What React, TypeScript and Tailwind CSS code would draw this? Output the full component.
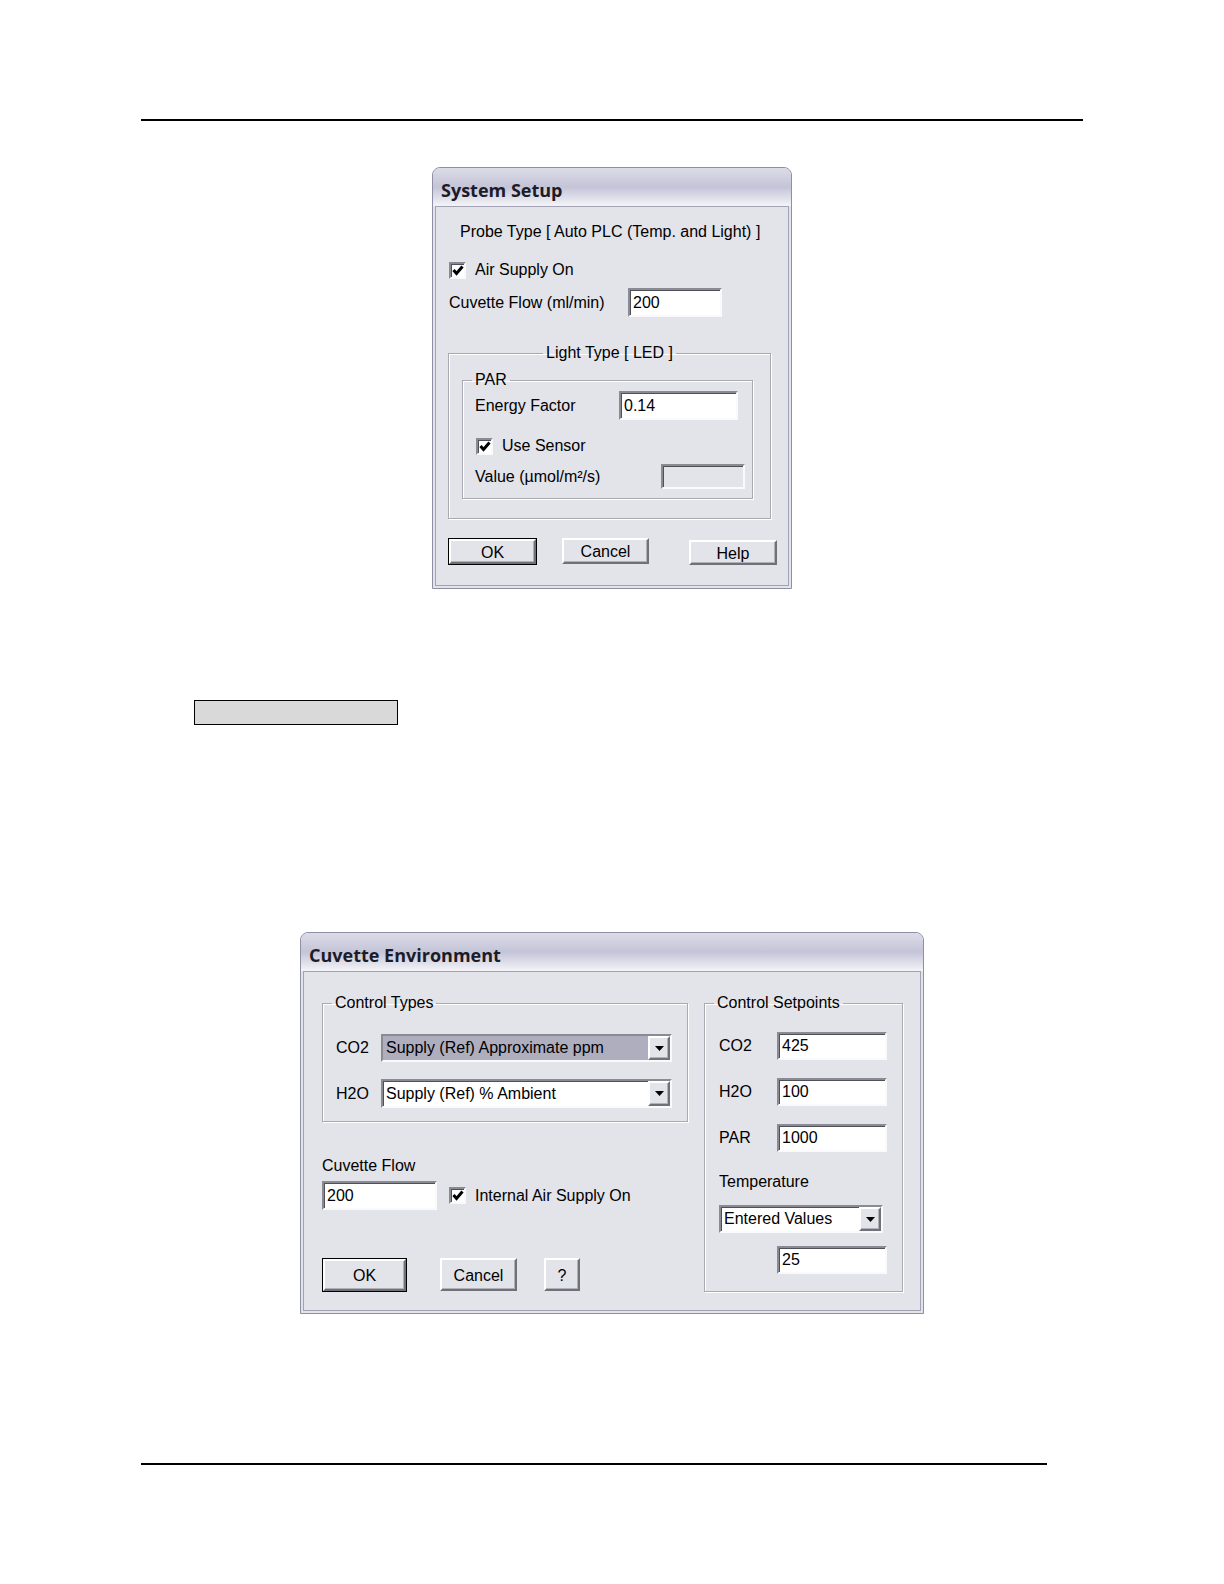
import React from 'react'

const font = { fontFamily: '"Liberation Sans", Arial, sans-serif' }

const sunken =
  'border-2 border-t-[#8a8a92] border-l-[#8a8a92] border-b-[#fafafc] border-r-[#fafafc] shadow-[inset_1px_1px_0_#505058]'
const raised =
  'border-2 border-t-white border-l-white border-b-[#707078] border-r-[#707078] shadow-[inset_-1px_-1px_0_#b0b0b8]'

function Edit({ value = '', className = '', disabled = false }: { value?: string; className?: string; disabled?: boolean }) {
  return (
    <div
      className={`${sunken} flex items-center pl-[3px] text-[16px] text-black ${disabled ? 'bg-[#e3e3ea]' : 'bg-white'} ${className}`}
    >
      {value}
    </div>
  )
}

function Check({ label, className = '' }: { label: string; className?: string }) {
  return (
    <div className={`flex items-center ${className}`}>
      <div className={`${sunken} flex h-[17px] w-[17px] items-center justify-center bg-white`}>
        <svg width="12" height="11" viewBox="0 0 12 11">
          <path d="M1.5 5 L4.5 8.5 L10.5 1.5" fill="none" stroke="#000" strokeWidth="3" />
        </svg>
      </div>
      <span className="ml-[9px] text-[16px] leading-[20px]">{label}</span>
    </div>
  )
}

function Button({ label, isDefault = false, className = '' }: { label: string; isDefault?: boolean; className?: string }) {
  if (isDefault) {
    return (
      <div className={`border border-black ${className}`}>
        <div className={`${raised} flex h-full w-full items-center justify-center bg-[#e3e3ea] pt-[2px] text-[16px]`}>{label}</div>
      </div>
    )
  }
  return (
    <div className={`${raised} flex items-center justify-center bg-[#e3e3ea] pt-[2px] text-[16px] ${className}`}>{label}</div>
  )
}

function Combo({ value, selected = false, className = '' }: { value: string; selected?: boolean; className?: string }) {
  return (
    <div className={`${sunken} flex bg-white ${className}`}>
      <div className={`flex flex-1 items-center pl-[3px] text-[16px] ${selected ? 'bg-[#aeaebe]' : ''}`}>{value}</div>
      <div className={`${raised} flex w-[22px] items-center justify-center bg-[#e3e3ea]`}>
        <svg width="9" height="5" viewBox="0 0 9 5">
          <path d="M0 0 H9 L4.5 5 Z" fill="#000" />
        </svg>
      </div>
    </div>
  )
}

function Window({ title, className = '', children }: { title: string; className?: string; children: React.ReactNode }) {
  return (
    <div className={`flex flex-col overflow-hidden rounded-t-[8px] border border-[#8e8ea6] bg-[#e3e3ea] ${className}`}>
      <div className="h-[38px] shrink-0 bg-gradient-to-b from-[#dcdce8] via-[#c4c4d8] to-[#f4f4f8] pl-[8px] pt-[11px]">
        <span
          className="text-[18px] font-bold leading-[22px] text-[#1c1c28]"
          style={{ fontFamily: '"Open Sans", "DejaVu Sans", sans-serif' }}
        >
          {title}
        </span>
      </div>
      <div className="mx-[2px] mb-[2px] flex flex-1 flex-col border border-[#a2a2b4] bg-[#e3e3ea]">{children}</div>
    </div>
  )
}

function Group({ label, center = false, className = '', children }: { label: string; center?: boolean; className?: string; children: React.ReactNode }) {
  return (
    <fieldset className={`border border-[#a9a9b4] shadow-[inset_1px_1px_0_#fff,1px_1px_0_#fff] ${className}`}>
      <legend className={`px-[3px] text-[16px] leading-[20px] ${center ? 'mx-auto' : 'ml-[9px]'}`}>{label}</legend>
      {children}
    </fieldset>
  )
}

function SystemSetup() {
  return (
    <Window title="System Setup" className="ml-[432px] mt-[46px] h-[422px] w-[360px]">
      <div className="ml-[24px] mt-[15px] text-[16px] leading-[20px]">Probe Type [ Auto PLC (Temp. and Light) ]</div>
      <Check label="Air Supply On" className="ml-[13px] mt-[18px]" />
      <div className="ml-[13px] mt-[8px] flex items-center">
        <span className="w-[179px] text-[16px]">Cuvette Flow (ml/min)</span>
        <Edit value="200" className="h-[29px] w-[94px]" />
      </div>
      <Group label="Light Type [ LED ]" center className="ml-[12px] mt-[26px] h-[176px] w-[323px]">
        <Group label="PAR" className="ml-[13px] mt-[7px] h-[129px] w-[291px]">
          <div className="mt-[1px] flex items-center pl-[12px]">
            <span className="w-[144px] text-[16px]">Energy Factor</span>
            <Edit value="0.14" className="h-[29px] w-[119px]" />
          </div>
          <Check label="Use Sensor" className="ml-[13px] mt-[16px]" />
          <div className="mt-[8px] flex items-center pl-[12px]">
            <span className="w-[186px] text-[16px]">Value (µmol/m²/s)</span>
            <Edit disabled className="h-[25px] w-[84px]" />
          </div>
        </Group>
      </Group>
      <div className="ml-[12px] mt-[19px] flex items-start">
        <Button label="OK" isDefault className="h-[27px] w-[89px]" />
        <Button label="Cancel" className="ml-[25px] h-[26px] w-[87px]" />
        <Button label="Help" className="ml-[40px] mt-[2px] h-[25px] w-[88px]" />
      </div>
    </Window>
  )
}

function CuvetteEnvironment() {
  return (
    <Window title="Cuvette Environment" className="ml-[300px] mt-[207px] h-[382px] w-[624px]">
      <div className="flex">
        <div className="ml-[18px] flex w-[366px] flex-col">
          <Group label="Control Types" className="mt-[21px] h-[129px] w-[366px]">
            <div className="mt-[21px] flex items-center pl-[13px]">
              <span className="w-[45px] text-[16px]">CO2</span>
              <Combo value="Supply (Ref) Approximate ppm" selected className="h-[28px] w-[291px]" />
            </div>
            <div className="mt-[17px] flex items-center pl-[13px]">
              <span className="w-[45px] text-[16px]">H2O</span>
              <Combo value="Supply (Ref) % Ambient" className="h-[29px] w-[291px]" />
            </div>
          </Group>
          <div className="mt-[34px] text-[16px] leading-[20px]">Cuvette Flow</div>
          <div className="mt-[5px] flex items-center">
            <Edit value="200" className="h-[29px] w-[115px]" />
            <Check label="Internal Air Supply On" className="ml-[12px]" />
          </div>
          <div className="mt-[48px] flex">
            <Button label="OK" isDefault className="h-[34px] w-[85px]" />
            <Button label="Cancel" className="ml-[33px] h-[33px] w-[77px]" />
            <Button label="?" className="ml-[27px] h-[33px] w-[36px]" />
          </div>
        </div>
        <Group label="Control Setpoints" className="ml-[16px] mt-[21px] h-[299px] w-[199px]">
          <div className="mt-[19px] flex items-center pl-[14px]">
            <span className="w-[58px] text-[16px]">CO2</span>
            <Edit value="425" className="h-[28px] w-[110px]" />
          </div>
          <div className="mt-[18px] flex items-center pl-[14px]">
            <span className="w-[58px] text-[16px]">H2O</span>
            <Edit value="100" className="h-[28px] w-[110px]" />
          </div>
          <div className="mt-[18px] flex items-center pl-[14px]">
            <span className="w-[58px] text-[16px]">PAR</span>
            <Edit value="1000" className="h-[28px] w-[110px]" />
          </div>
          <div className="ml-[14px] mt-[20px] text-[16px] leading-[20px]">Temperature</div>
          <Combo value="Entered Values" className="ml-[14px] mt-[13px] h-[28px] w-[164px]" />
          <Edit value="25" className="ml-[72px] mt-[13px] h-[28px] w-[110px]" />
        </Group>
      </div>
    </Window>
  )
}

export default function App() {
  return (
    <div className="flex min-h-[1584px] w-[1224px] flex-col bg-white text-black" style={font}>
      <div className="ml-[141px] mt-[119px] h-[2px] w-[942px] bg-black" />
      <SystemSetup />
      <div className="ml-[194px] mt-[111px] h-[25px] w-[204px] border border-black bg-[#d9d9d9]" />
      <CuvetteEnvironment />
      <div className="ml-[141px] mt-[149px] h-[2px] w-[906px] bg-black" />
    </div>
  )
}
